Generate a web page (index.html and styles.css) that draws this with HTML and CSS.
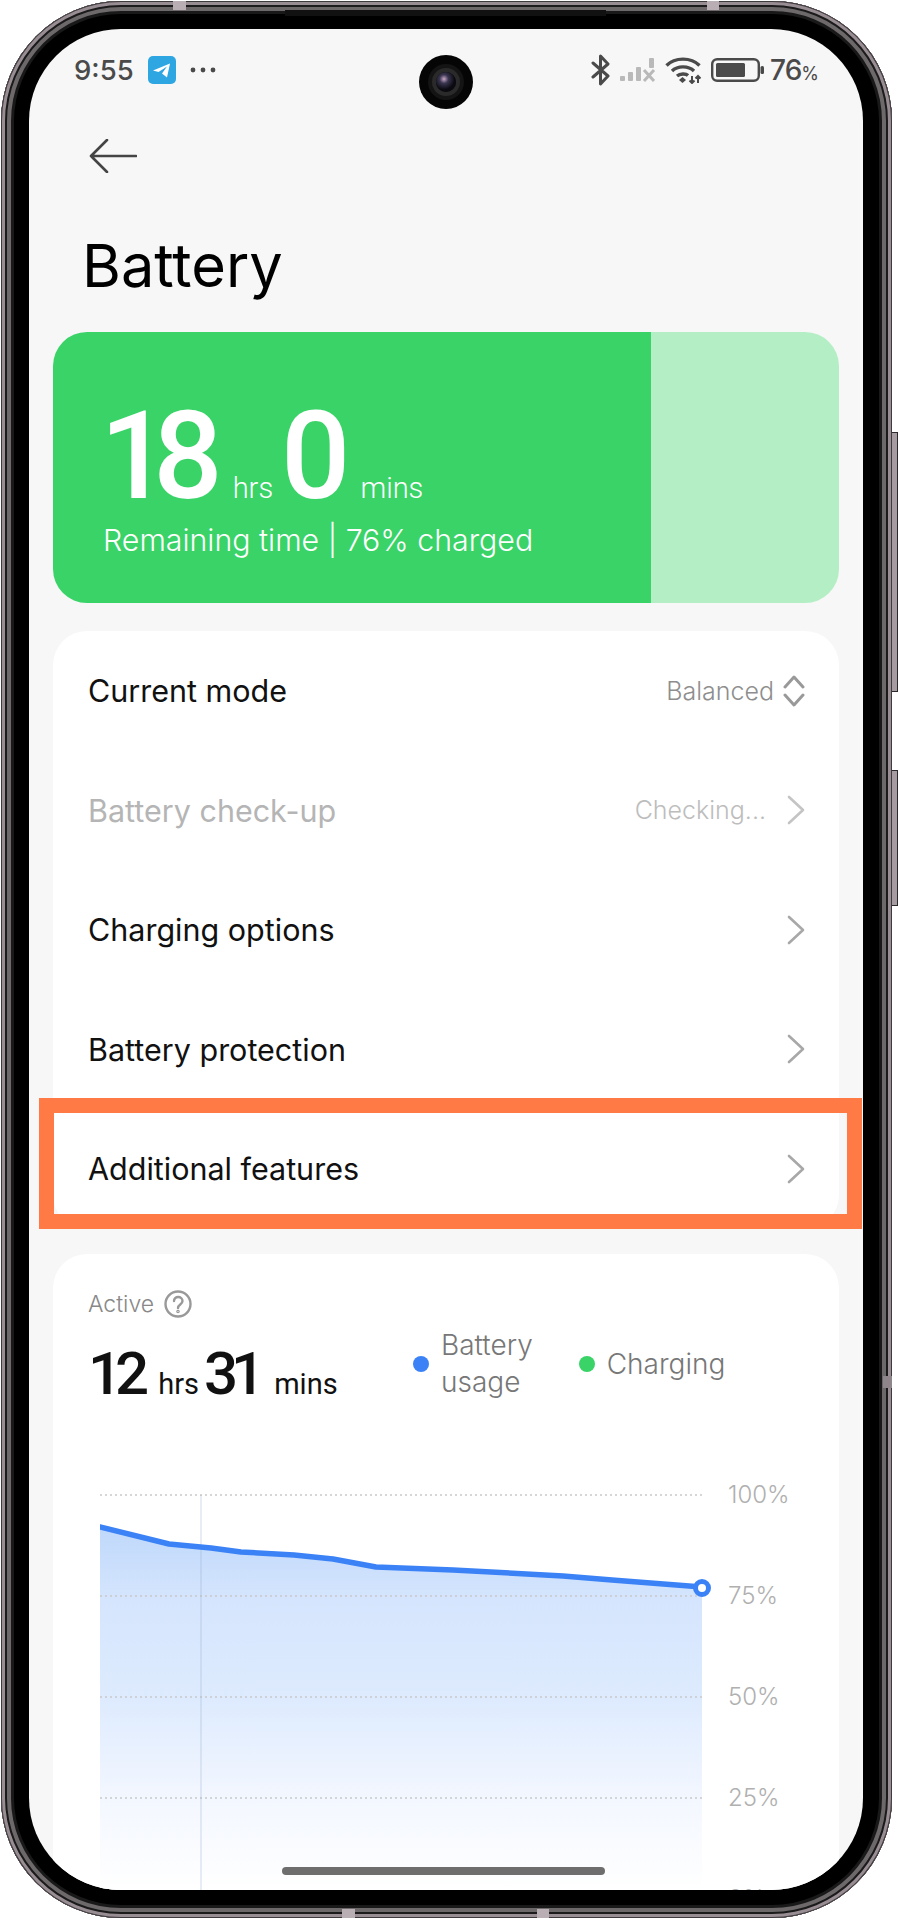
FILE: index.html
```html
<!DOCTYPE html>
<html lang="en">
<head>
    <meta charset="UTF-8">
    <meta name="viewport" content="width=device-width, initial-scale=1.0">
    <title>Battery</title>
    <link rel="stylesheet" href="styles.css">
</head>
<body>
    <div class="phone">
        <span class="side-btn side-btn-top"></span>
        <span class="side-btn side-btn-low"></span>
        <span class="tick tick-t1"></span>
        <span class="tick tick-t2"></span>
        <span class="tick tick-b1"></span>
        <span class="tick tick-b2"></span>
        <span class="tick tick-r1"></span>
        <span class="speaker"></span>

        <div class="screen">
            <div class="camera"><span class="lens"></span></div>

            <div class="status">
                <div class="status-left">
                    <span class="clock">9:55</span>
                    <svg class="tg" width="28" height="28" viewBox="0 0 28 28">
                        <rect width="28" height="28" rx="5" fill="#2ea6e2"/>
                        <path d="M5 14.5 L22 7.5 L19 21.5 L14 17.5 L19 10.5 L10.5 16 Z" fill="#fff"/>
                    </svg>
                    <svg width="26" height="6" viewBox="0 0 26 6" fill="#4a4a4a">
                        <circle cx="3" cy="3" r="2.4"/><circle cx="13" cy="3" r="2.4"/><circle cx="23" cy="3" r="2.4"/>
                    </svg>
                </div>
                <div class="status-right">
                    <svg width="20" height="32" viewBox="0 0 20 32" fill="none" stroke="#4a4a4a" stroke-width="3" stroke-linejoin="round" stroke-linecap="round">
                        <path d="M2 9 L17 22 L9.5 30 V2 L17 10 L2 23"/>
                    </svg>
                    <svg class="sig" width="36" height="24" viewBox="0 0 36 24" fill="#b9b9b9">
                        <rect x="0" y="18" width="5" height="5" rx="1"/>
                        <rect x="8" y="14" width="5" height="9" rx="1"/>
                        <rect x="16" y="9" width="5" height="14" rx="1"/>
                        <rect x="29" y="0" width="5" height="10" rx="1"/>
                        <path d="M24 12 L34 23 M34 12 L24 23" stroke="#b9b9b9" stroke-width="3" fill="none"/>
                    </svg>
                    <svg class="wifi" width="37" height="28" viewBox="0 0 37 28" fill="none" stroke="#4a4a4a" stroke-width="3.4">
                        <path d="M1.5 9.5 C10 1 26 1 34.5 9.5"/>
                        <path d="M7 15 C12.5 9.500 23.500 9.500 29 15"/>
                        <path d="M12 20 C15 17.500 21 17.500 23 19.500"/>
                        <path d="M14 24 L17.500 21 L21 24 L17.500 27 Z" fill="#4a4a4a" stroke="none"/>
                        <path d="M27 20 V27 M24.500 24.500 L27 27 L29.500 24.500 M33 27 V20 M30.500 22.500 L33 20 L35.500 22.500" stroke-width="2"/>
                    </svg>
                    <svg class="batt" width="53" height="24" viewBox="0 0 53 24" fill="none">
                        <rect x="1.200" y="1.200" width="46.600" height="21.600" rx="5" stroke="#4a4a4a" stroke-width="2.400"/>
                        <rect x="5" y="5" width="29" height="14" rx="1.500" fill="#4a4a4a"/>
                        <rect x="49.500" y="8" width="3.500" height="8" rx="1.500" fill="#4a4a4a"/>
                    </svg>
                    <span class="pct">76<small>%</small></span>
                </div>
            </div>

            <div class="topbar">
                <svg width="48" height="34" viewBox="0 0 48 34" fill="none" stroke="#444" stroke-width="2.600" stroke-linecap="round" stroke-linejoin="round">
                    <path d="M47 17 H2 M18 1 L2 17 L18 33"/>
                </svg>
            </div>

            <h1 class="page-title">Battery</h1>

            <section class="hero">
                <div class="hero-main">
                    <div class="hero-time">
                        <b>18</b><i>hrs</i><b>0</b><i>mins</i>
                    </div>
                    <div class="hero-sub">Remaining time | 76% charged</div>
                </div>
                <div class="hero-rest"></div>
            </section>

            <section class="card card-list">
                <div class="row">
                    <span>Current mode</span>
                    <div class="row-value">
                        <span>Balanced</span>
                        <svg class="updown" width="22" height="34" viewBox="0 0 22 34" fill="none" stroke="#999" stroke-width="3" stroke-linecap="round" stroke-linejoin="round">
                            <path d="M2 13 L11 3 L20 13 M2 21 L11 31 L20 21"/>
                        </svg>
                    </div>
                </div>
                <div class="row row-off">
                    <span>Battery check-up</span>
                    <div class="row-value">
                        <span>Checking...</span>
                        <svg width="30" height="30" viewBox="0 0 30 30" fill="none" stroke="#c4c4c4" stroke-width="2.600" stroke-linecap="round" stroke-linejoin="round">
                            <path d="M14 2 L28 15 L14 28"/>
                        </svg>
                    </div>
                </div>
                <div class="row">
                    <span>Charging options</span>
                    <div class="row-value">
                        <svg width="30" height="30" viewBox="0 0 30 30" fill="none" stroke="#a8a8a8" stroke-width="2.600" stroke-linecap="round" stroke-linejoin="round">
                            <path d="M14 2 L28 15 L14 28"/>
                        </svg>
                    </div>
                </div>
                <div class="row">
                    <span>Battery protection</span>
                    <div class="row-value">
                        <svg width="30" height="30" viewBox="0 0 30 30" fill="none" stroke="#a8a8a8" stroke-width="2.600" stroke-linecap="round" stroke-linejoin="round">
                            <path d="M14 2 L28 15 L14 28"/>
                        </svg>
                    </div>
                </div>
                <div class="row">
                    <span>Additional features</span>
                    <div class="row-value">
                        <svg width="30" height="30" viewBox="0 0 30 30" fill="none" stroke="#a8a8a8" stroke-width="2.600" stroke-linecap="round" stroke-linejoin="round">
                            <path d="M14 2 L28 15 L14 28"/>
                        </svg>
                    </div>
                </div>
            </section>

            <!-- annotation box over the last row -->
            <div class="highlight"></div>

            <section class="card usage">
                <div class="usage-label">
                    <span>Active</span>
                    <svg width="28" height="28" viewBox="0 0 28 28" fill="none" stroke="#999" stroke-width="2.400" stroke-linecap="round">
                        <circle cx="14" cy="14" r="12.500"/>
                        <path d="M10 11 C10 5.500 18.500 6 18.500 11 C18.500 14.500 14 14.500 14 18"/>
                        <circle cx="14" cy="21.500" r="0.600"/>
                    </svg>
                </div>
                <div class="usage-head">
                    <div class="usage-time">
                        <b>12</b><i>hrs</i><b>31</b><i>mins</i>
                    </div>
                    <div class="legend">
                        <div class="legend-item"><span class="dot dot-blue"></span><span class="legend-text">Battery<br>usage</span></div>
                        <div class="legend-item"><span class="dot dot-green"></span><span class="legend-text">Charging</span></div>
                    </div>
                </div>
                <div class="chart">
                    <svg class="plot" width="612" height="400" viewBox="0 0 612 400">
                        <defs>
                            <linearGradient id="area" x1="0" y1="0" x2="0" y2="1">
                                <stop offset="0" stop-color="#bfd8fb"/>
                                <stop offset="0.2" stop-color="#d5e5fd"/>
                                <stop offset="0.48" stop-color="#deebfe"/>
                                <stop offset="0.75" stop-color="#f3f7ff"/>
                                <stop offset="1" stop-color="#ffffff"/>
                            </linearGradient>
                        </defs>
                        <path d="M0 37 L69 54 L111 58 L141 62 L194 65 L233 69 L276 77 L353 80 L463 86 L512 90 L602 97 V400 H0 Z" fill="url(#area)"/>
                        <g class="grid">
                            <path d="M0 5 H603"/>
                            <path d="M0 106 H603"/>
                            <path d="M0 207 H603"/>
                            <path d="M0 308 H603"/>
                        </g>
                        <path d="M101 5 V400" stroke="#8fa6c8" stroke-opacity="0.4" stroke-width="1"/>
                        <path d="M0 37 L69 54 L111 58 L141 62 L194 65 L233 69 L276 77 L353 80 L463 86 L512 90 L602 97" fill="none" stroke="#3b82f6" stroke-width="5.500" stroke-linecap="round" stroke-linejoin="round"/>
                        <circle cx="602" cy="98" r="6.500" fill="#fff" stroke="#3b82f6" stroke-width="5"/>
                    </svg>
                    <div class="axis">
                        <span>100%</span>
                        <span>75%</span>
                        <span>50%</span>
                        <span>25%</span>
                        <span>0%</span>
                    </div>
                </div>
            </section>

            <span class="home-bar"></span>
        </div>
    </div>
</body>
</html>
```

FILE: styles.css
```css
body {
    margin: 0;
    background: #fff;
    font-family: Inter, "Noto Sans", sans-serif;
    color: #111;
}
.phone {
    position: relative;
    box-sizing: border-box;
    width: 891px;
    height: 1917px;
    margin: 1px 0 0 1px;
    padding: 28px 29px 28px 28px;
    background: #000;
    border-radius: 120px;
    box-shadow:
        inset 0 0 0 1px #3f3b3d,
        inset 0 0 0 4px #998d94,
        inset 0 0 0 6px #1c1b1c,
        inset 0 0 0 10px #6d696b,
        inset 0 0 0 13px #1a191a;
}
.side-btn {
    position: absolute;
    left: 891px;
    width: 5px;
    background: #a79ba2;
    border: 1px solid #2b292b;
    border-left: none;
}
.side-btn-top { top: 431px; height: 258px; }
.side-btn-low { top: 769px; height: 134px; }
.tick {
    position: absolute;
    background: #b9aeb4;
}
.tick-t1 { left: 172px; top: 0; width: 13px; height: 9px; }
.tick-t2 { left: 706px; top: 0; width: 12px; height: 9px; }
.tick-b1 { left: 341px; bottom: 0; width: 13px; height: 9px; }
.tick-b2 { left: 536px; bottom: 0; width: 12px; height: 9px; }
.tick-r1 { right: 0; top: 1375px; width: 9px; height: 12px; background: #8f868b; }
.speaker {
    position: absolute;
    left: 284px;
    top: 9px;
    width: 321px;
    height: 6px;
    background: #111;
}
.screen {
    position: relative;
    height: 1861px;
    overflow: hidden;
    background: #f7f7f7;
    border-radius: 92px;
}

/* status bar */
.status {
    display: flex;
    justify-content: space-between;
    align-items: center;
    height: 82px;
    padding: 0 45px;
    box-sizing: border-box;
    color: #4a4a4a;
}
.status-left, .status-right {
    display: flex;
    align-items: center;
}
.clock {
    font-size: 27.5px;
    margin-right: 14px;
    font-weight: 500;
}
.tg { margin-right: 14px; }
.status-right svg { margin-right: 9px; }
.status-right .batt { margin-right: 6px; }
.pct {
    font-size: 28px;
    font-weight: 500;
    letter-spacing: -1px;
}
.pct small { font-size: 18px; font-weight: 400; }
.camera {
    position: absolute;
    left: 390px;
    top: 26px;
    width: 54px;
    height: 54px;
    border-radius: 50%;
    background: #050505;
    display: flex;
    align-items: center;
    justify-content: center;
}
.lens {
    width: 20px;
    height: 20px;
    border-radius: 50%;
    background: radial-gradient(circle at 40% 35%, #c8a8c8 0, #3a3550 25%, #0a0a10 60%);
    box-shadow: 0 0 0 4px #2a2a2a, 0 0 0 8px #141414;
}

.topbar {
    height: 90px;
    padding-left: 60px;
    display: flex;
    align-items: center;
}
.page-title {
    margin: 0;
    height: 131px;
    padding-left: 53px;
    font-size: 59.5px;
    font-weight: 400;
    line-height: 128px;
    color: #000;
}

/* green summary */
.hero {
    display: flex;
    height: 271px;
    margin: 0 24px 28px;
    border-radius: 34px;
    overflow: hidden;
    color: #fff;
}
.hero-main {
    flex: 0 0 598px;
    box-sizing: border-box;
    padding: 62px 0 0 47px;
    background: #39d368;
}
.hero-rest {
    flex: 1;
    background: #b4eec5;
}
.hero-time {
    display: flex;
    align-items: baseline;
    height: 125px;
    line-height: 125px;
    font-family: Roboto, sans-serif;
}
.hero-time b {
    font-size: 122px;
    font-weight: 500;
    letter-spacing: -16px;
}
.hero-time i {
    font-size: 29px;
    font-style: normal;
    font-weight: 300;
    margin: 0 8px 0 26px;
}
.hero-sub {
    margin: 3px 0 0 3px;
    font-size: 30.3px;
    font-weight: 300;
}

/* list card */
.card {
    margin: 0 24px 24px;
    background: #fff;
    border-radius: 34px;
}
.card-list { margin-bottom: 25px; }
.row {
    display: flex;
    justify-content: space-between;
    align-items: center;
    height: 119.5px;
    padding: 0 34px 0 35px;
    font-size: 30.5px;
}
.row-value {
    display: flex;
    align-items: center;
    gap: 9px;
    font-size: 25px;
    font-weight: 300;
    color: #8e8e8e;
}
.row-off { color: #b5b5b5; }
.row-off .row-value { color: #bdbdbd; }

.highlight {
    position: absolute;
    left: 10px;
    top: 1069px;
    width: 793px;
    height: 101px;
    border: 15px solid #ff7a45;
    pointer-events: none;
}

/* usage card */
.usage {
    height: 700px;
    padding: 34px 0 0 35px;
    box-sizing: border-box;
}
.usage-label {
    display: flex;
    align-items: center;
    gap: 10px;
    height: 32px;
    font-size: 23px;
    font-weight: 300;
    color: #888;
}
.usage-head {
    display: flex;
    align-items: center;
    height: 75px;
    margin-top: 7px;
}
.usage-time {
    display: flex;
    align-items: baseline;
    width: 325px;
    padding-top: 18px;
    font-family: Roboto, sans-serif;
}
.usage-time b {
    font-size: 60px;
    font-weight: 500;
    letter-spacing: -7px;
}
.usage-time i {
    font-size: 29px;
    font-style: normal;
    font-weight: 400;
    margin: 0 5px 0 16px;
}
.legend {
    display: flex;
    align-items: center;
    gap: 46px;
}
.legend-item {
    display: flex;
    align-items: center;
    gap: 12px;
}
.legend-text {
    font-size: 28px;
    font-weight: 300;
    line-height: 37px;
    color: #777;
}
.dot {
    width: 16px;
    height: 16px;
    border-radius: 50%;
}
.dot-blue { background: #3b82f6; }
.dot-green { background: #39d368; }
.chart {
    display: flex;
    margin: 88px 0 0 12px;
}
.plot { flex: none; }
.grid path {
    stroke: #c9c9c9;
    stroke-width: 1.5;
    stroke-dasharray: 2 3;
}
.axis {
    display: flex;
    flex-direction: column;
    margin-left: 16px;
    font-size: 24px;
    font-weight: 300;
    color: #b0b0b0;
}
.axis span {
    height: 101px;
    line-height: 10px;
}
.home-bar {
    position: absolute;
    left: 253px;
    bottom: 15px;
    width: 323px;
    height: 8px;
    border-radius: 4px;
    background: #6e6e6e;
}
```
